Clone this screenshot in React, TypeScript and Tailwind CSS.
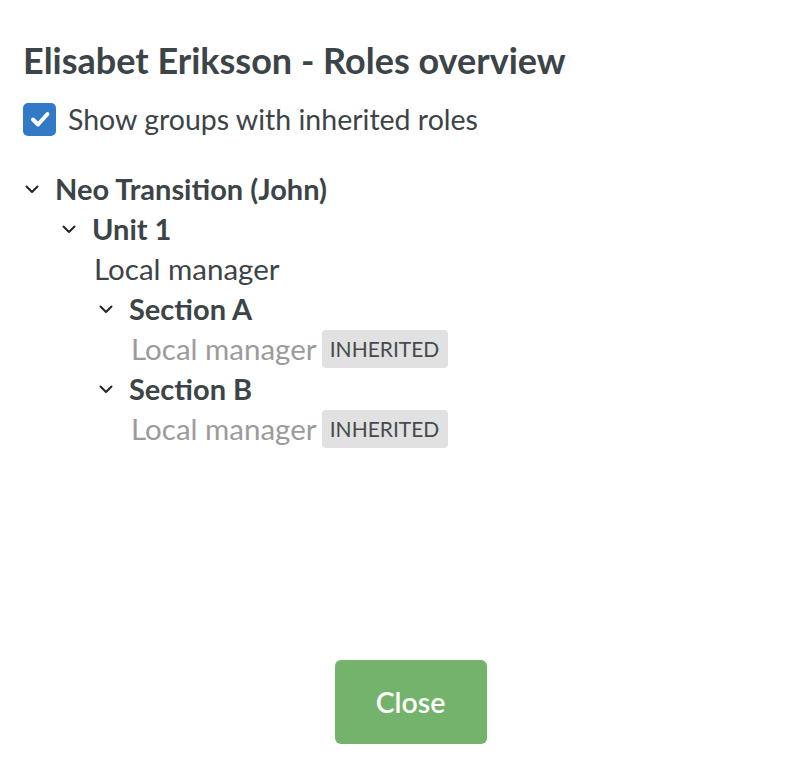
import React, { useState } from 'react';

interface Role {
  name: string;
  inherited?: boolean;
}

interface Group {
  name: string;
  roles: Role[];
  children: Group[];
}

const tree: Group = {
  name: 'Neo Transition (John)',
  roles: [],
  children: [
    {
      name: 'Unit 1',
      roles: [{ name: 'Local manager' }],
      children: [
        { name: 'Section A', roles: [{ name: 'Local manager', inherited: true }], children: [] },
        { name: 'Section B', roles: [{ name: 'Local manager', inherited: true }], children: [] },
      ],
    },
  ],
};

const Chevron = () => (
  <svg width="18" height="18" viewBox="0 0 18 18" fill="none" className="shrink-0">
    <path d="M3.5 6.5 9 12 14.5 6.5" stroke="#1f2427" strokeWidth="2" strokeLinecap="round" strokeLinejoin="round" />
  </svg>
);

const GroupNode: React.FC<{ group: Group }> = ({ group }) => {
  const [open, setOpen] = useState(true);
  return (
    <div>
      <button onClick={() => setOpen(!open)} className="flex items-center gap-[14px] h-[40px] -ml-[34px]">
        <Chevron />
        <span className="font-bold text-[29px] text-[#3c4448]">{group.name}</span>
      </button>
      {open && (
        <div>
          {group.roles.map((r, i) => (
            <div key={i} className="flex items-center gap-[5px] h-[40px]">
              <span className={`text-[29.5px] ${r.inherited ? 'text-[#9b9b9b]' : 'text-[#3c4448]'}`}>{r.name}</span>
              {r.inherited && (
                <span className="bg-[#e1e1e1] rounded-[4px] w-[126px] justify-center h-[38px] flex items-center text-[21px] text-[#444b4f] uppercase">
                  Inherited
                </span>
              )}
            </div>
          ))}
          {group.children.map((c, i) => (
            <div key={i} className="pl-[37px]">
              <GroupNode group={c} />
            </div>
          ))}
        </div>
      )}
    </div>
  );
};

export default function App() {
  const [showInherited, setShowInherited] = useState(true);
  return (
    <div className="w-[798px] h-[766px] bg-white flex flex-col pl-[23px] pt-[38px] pb-[22px]" style={{ fontFamily: 'Lato, "Open Sans", sans-serif' }}>
      <h1 className="text-[36px] font-bold text-[#3c4448] leading-[44px]">Elisabet Eriksson - Roles overview</h1>
      <label className="flex items-center gap-[12px] mt-[16px] cursor-pointer">
        <span
          onClick={() => setShowInherited(!showInherited)}
          className={`w-[33px] h-[33px] rounded-[5px] flex items-center justify-center ${showInherited ? 'bg-[#3279c6]' : 'border-2 border-gray-400'}`}
        >
          {showInherited && (
            <svg width="22" height="22" viewBox="0 0 22 22" fill="none">
              <path d="M4 11.5 9 16.5 18.5 6" stroke="white" strokeWidth="4" strokeLinecap="round" strokeLinejoin="round" />
            </svg>
          )}
        </span>
        <span className="text-[28.5px] text-[#3c4448]">Show groups with inherited roles</span>
      </label>
      <div className="mt-[28px] pl-[34px]">
        <GroupNode group={tree} />
      </div>
      <div className="mt-auto flex justify-center">
        <button className="w-[152px] h-[84px] rounded-[6px] bg-[#73b36b] text-white text-[28.5px] font-semibold">Close</button>
      </div>
    </div>
  );
}
